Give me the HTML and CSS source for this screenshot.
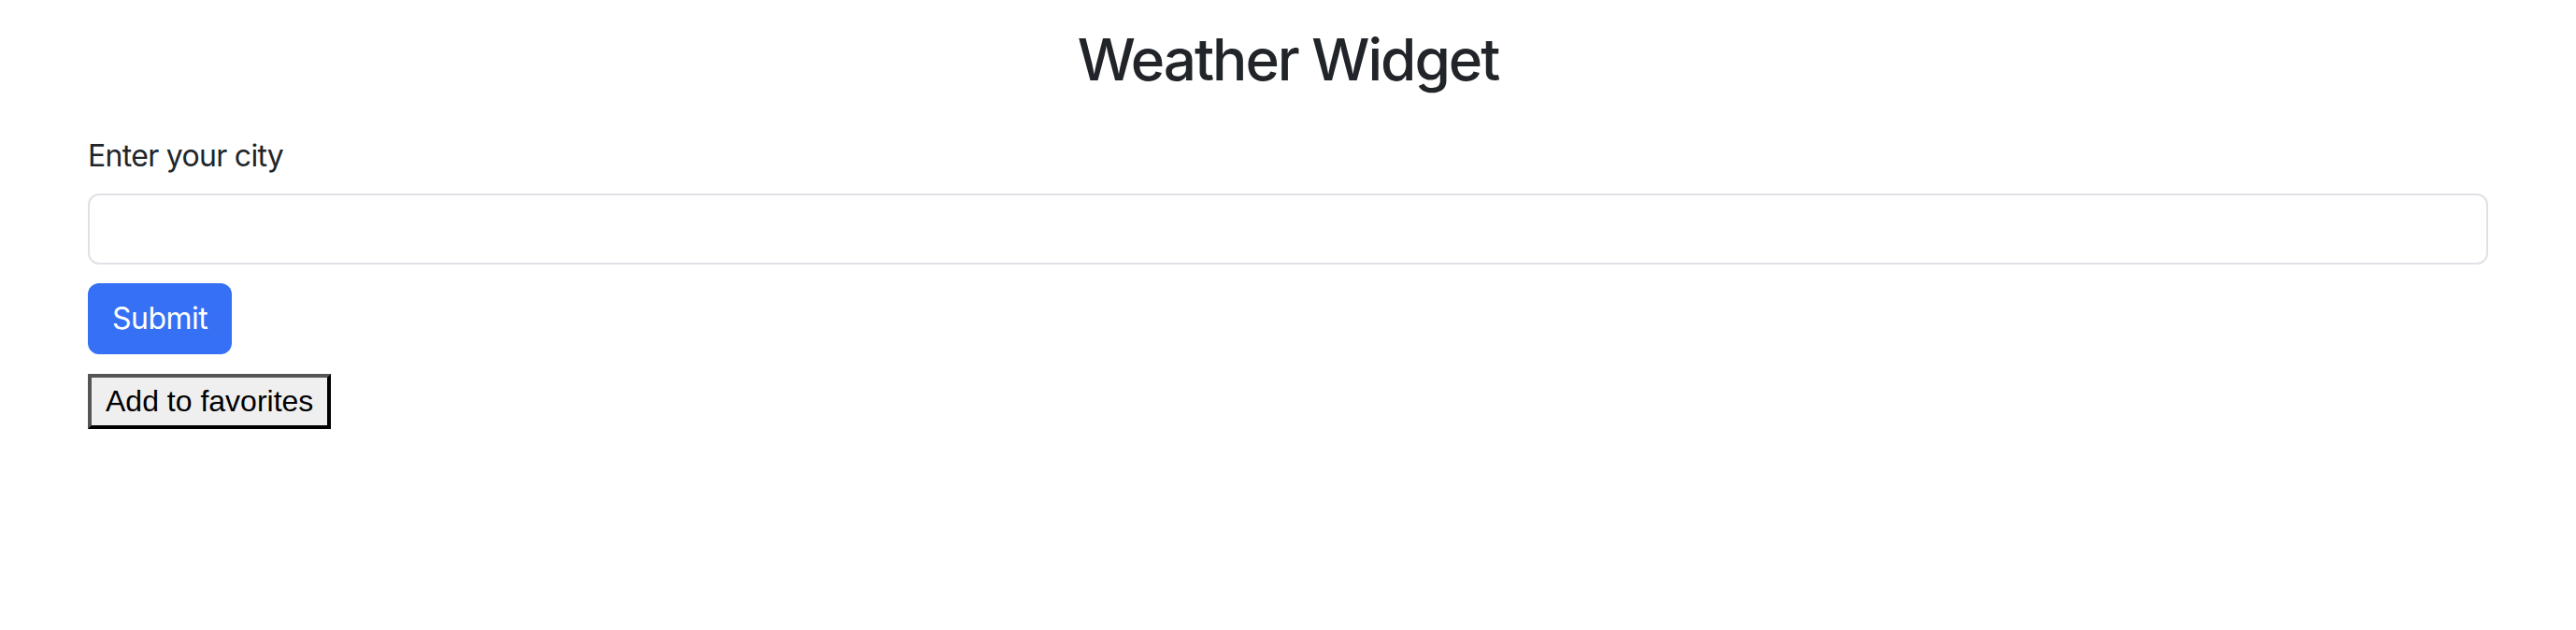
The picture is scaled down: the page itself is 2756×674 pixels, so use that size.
FILE: index.html
```html
<!DOCTYPE html>
<html lang="en">
<head>
<meta charset="utf-8">
<title>Weather Widget</title>
<link rel="stylesheet" href="styles.css">
</head>
<body>
<div class="container">
  <h1 class="title">Weather Widget</h1>
  <form class="form">
    <label class="label" for="city">Enter your city</label>
    <input class="input" id="city" type="text">
    <button class="btn-submit" type="button">Submit</button>
  </form>
  <button class="btn-fav" type="button">Add to favorites</button>
</div>
</body>
</html>
```
FILE: styles.css
```css
* { box-sizing: border-box; }
body {
  margin: 0;
  background: #ffffff;
  font-family: Inter, "Noto Sans", sans-serif;
  color: #212529;
}
.container {
  padding: 0 94px;
  display: flex;
  flex-direction: column;
  align-items: flex-start;
}
.title {
  align-self: stretch;
  text-align: center;
  font-size: 62px;
  font-weight: 500;
  letter-spacing: -2px;
  line-height: 76px;
  margin: 26px 0 0;
  color: #212529;
}
.form {
  align-self: stretch;
  display: flex;
  flex-direction: column;
  align-items: flex-start;
  margin-top: 41px;
}
.label {
  font-size: 32px;
  line-height: 48px;
  letter-spacing: -0.7px;
  margin-bottom: 16px;
}
.input {
  align-self: stretch;
  height: 76px;
  border: 2px solid #dee2e6;
  border-radius: 12px;
  padding: 0 24px;
  font-size: 32px;
  font-family: inherit;
  background: #fff;
}
.btn-submit {
  margin-top: 20px;
  height: 76px;
  padding: 0 26px;
  border: 0;
  border-radius: 12px;
  background: #3570f5;
  color: #ffffff;
  font-family: inherit;
  font-size: 32px;
  letter-spacing: -0.5px;
  line-height: 48px;
}
.btn-fav {
  margin-top: 21px;
  height: 59px;
  padding: 0 15px;
  border: 4px solid;
  border-color: #555555 #000000 #000000 #555555;
  background: #efefef;
  color: #000000;
  font-family: "Liberation Sans", Arial, sans-serif;
  font-size: 32px;
  line-height: 37px;
}
```
